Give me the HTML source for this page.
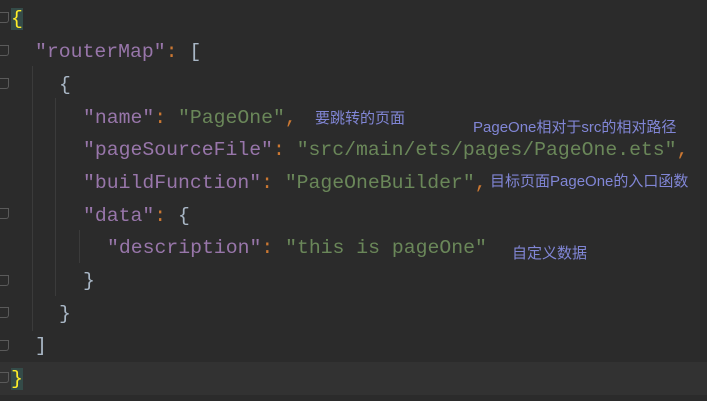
<!DOCTYPE html>
<html><head><meta charset="utf-8"><style>
body{margin:0;width:707px;height:401px;background:#2b2b2b;overflow:hidden;position:relative;font-family:"Liberation Mono",monospace;}
.l{position:absolute;left:0;height:33px;line-height:33px;font-size:19.8px;white-space:pre;color:#a9b7c6}
.k{color:#9876aa}.s{color:#6a8759}.p{color:#cc7832}.b{color:#a9b7c6}
.y{color:#ffef28;background:#344b48}
.hl{position:absolute;left:0;top:362px;width:707px;height:33px;background:#323232}
.g{position:absolute;width:1px;background:#3b3b3b}
.a{position:absolute;font-family:"Liberation Sans","Noto Sans CJK SC",sans-serif;font-size:15px;color:#8186d6;white-space:pre}
.f{position:absolute;left:0;width:8px;height:9px;border:1px solid #5a5a5a;border-left:none;border-radius:0 0 3px 0}
</style></head><body>
<div class="hl"></div>
<div class="g" style="left:32px;top:66px;height:265px"></div>
<div class="g" style="left:55px;top:98px;height:198px"></div>
<div class="g" style="left:79px;top:230px;height:33px"></div>
<div class="f" style="top:12px"></div><div class="f" style="top:45px"></div><div class="f" style="top:78px"></div><div class="f" style="top:208px"></div>
<div class="f" style="top:275px"></div><div class="f" style="top:307px"></div><div class="f" style="top:340px"></div><div class="f" style="top:372px"></div>
<div class="l" style="top:3px;left:11px"><span class="y">{</span></div>
<div class="l" style="top:36px;left:35px"><span class="k">"routerMap"</span><span class="p">: </span>[</div>
<div class="l" style="top:69px;left:59px">{</div>
<div class="l" style="top:102px;left:83px"><span class="k">"name"</span><span class="p">: </span><span class="s">"PageOne"</span><span class="p">,</span></div>
<div class="l" style="top:134px;left:83px"><span class="k">"pageSourceFile"</span><span class="p">: </span><span class="s">"src/main/ets/pages/PageOne.ets"</span><span class="p">,</span></div>
<div class="l" style="top:167px;left:83px"><span class="k">"buildFunction"</span><span class="p">: </span><span class="s">"PageOneBuilder"</span><span class="p">,</span></div>
<div class="l" style="top:200px;left:83px"><span class="k">"data"</span><span class="p">: </span>{</div>
<div class="l" style="top:232px;left:107px"><span class="k">"description"</span><span class="p">: </span><span class="s">"this is pageOne"</span></div>
<div class="l" style="top:265px;left:83px">}</div>
<div class="l" style="top:298px;left:59px">}</div>
<div class="l" style="top:330px;left:35px">]</div>
<div class="l" style="top:363px;left:11px"><span class="y">}</span></div>
<div class="a" style="left:315px;top:107px">要跳转的页面</div>
<div class="a" style="left:473px;top:116px">PageOne相对于src的相对路径</div>
<div class="a" style="left:490px;top:170px">目标页面PageOne的入口函数</div>
<div class="a" style="left:512px;top:242px">自定义数据</div>
</body></html>
